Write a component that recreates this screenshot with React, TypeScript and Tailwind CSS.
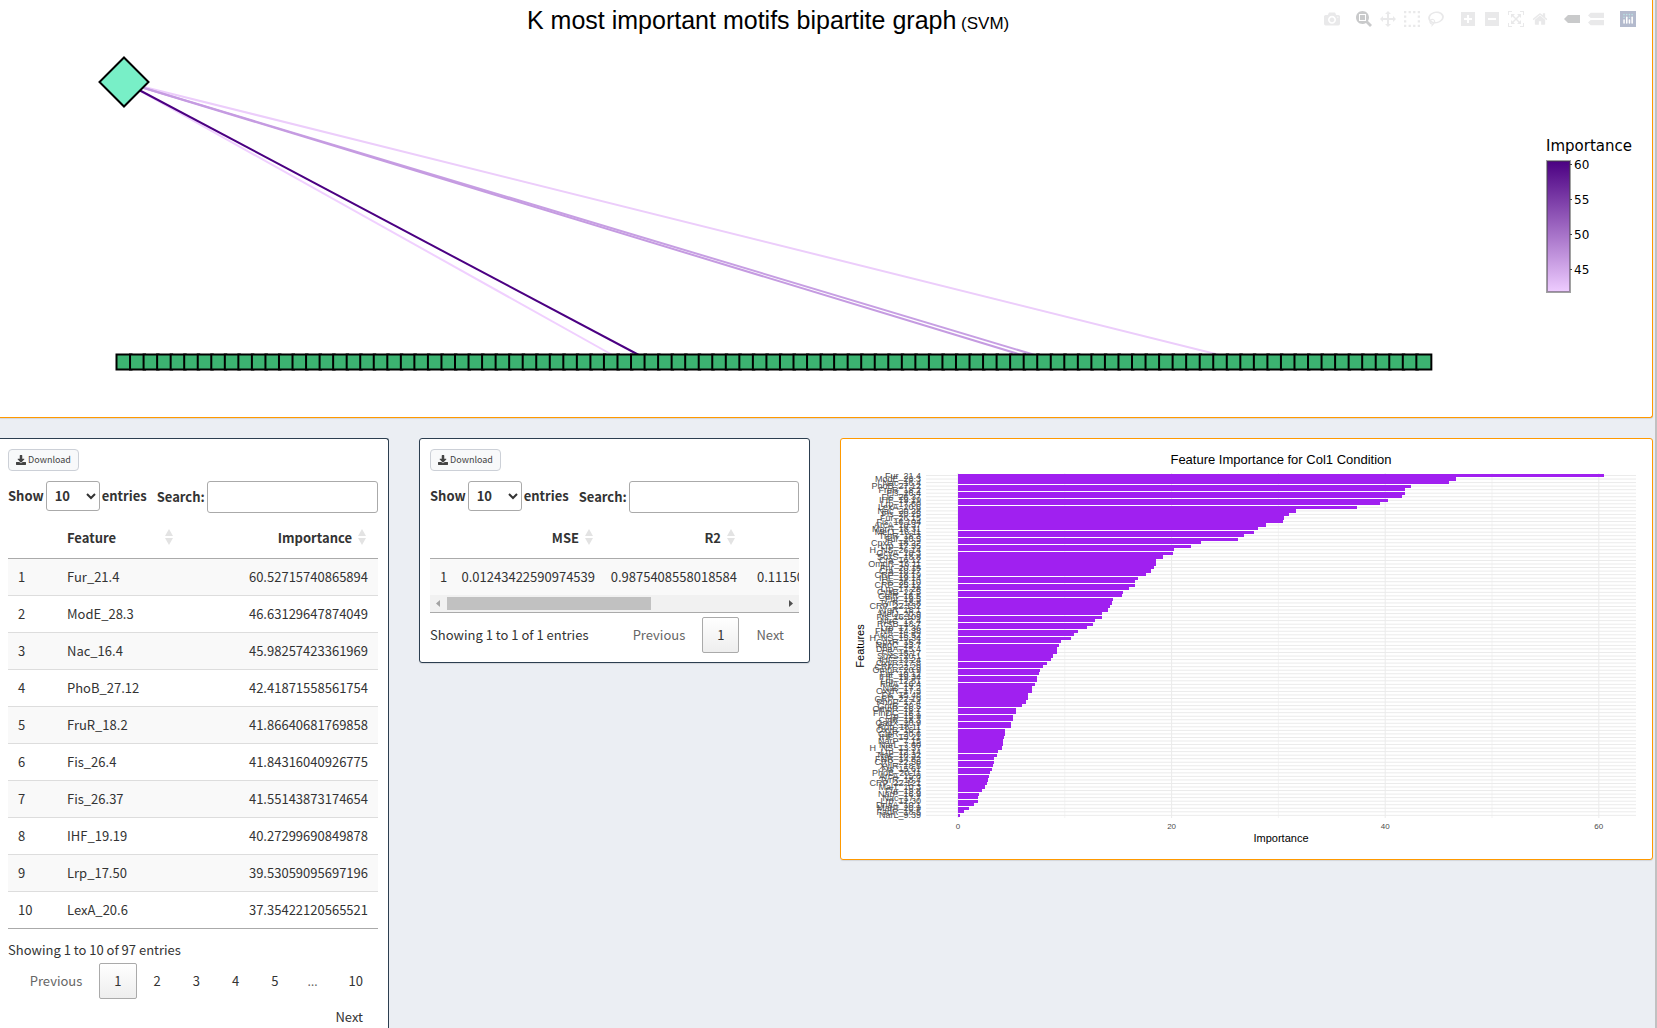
import React from "react";

const ICONS: Record<string, { w: number; h: number; d: string }> = {
  camera: { w: 1000, h: 1000, d: "m500 450c-83 0-150-67-150-150 0-83 67-150 150-150 83 0 150 67 150 150 0 83-67 150-150 150z m400 150h-120c-16 0-34 13-39 29l-31 93c-6 15-23 28-40 28h-340c-16 0-34-13-39-28l-31-94c-6-15-23-28-40-28h-120c-55 0-100-45-100-100v-450c0-55 45-100 100-100h800c55 0 100 45 100 100v450c0 55-45 100-100 100z m-400-550c-138 0-250 112-250 250 0 138 112 250 250 250 138 0 250-112 250-250 0-138-112-250-250-250z m365 380c-19 0-35 16-35 35 0 19 16 35 35 35 19 0 35-16 35-35 0-19-16-35-35-35z" },
  zoom: { w: 1000, h: 1000, d: "m1000-25l-250 251c40 63 63 138 63 218 0 224-182 406-407 406-224 0-406-182-406-406s183-406 407-406c80 0 155 22 218 62l250-250 125 125z m-812 250l0 438 437 0 0-438-437 0z m62 375l313 0 0-312-313 0 0 312z" },
  pan: { w: 1000, h: 1000, d: "m1000 350l-187 188 0-125-250 0 0 250 125 0-188 187-187-187 125 0 0-250-250 0 0 125-188-188 186-187 0 125 252 0 0-250-125 0 187-188 188 188-125 0 0 250 250 0 0-126 187 188z" },
  select: { w: 1000, h: 1000, d: "m0 850l0-143 143 0 0 143-143 0z m286 0l0-143 143 0 0 143-143 0z m285 0l0-143 143 0 0 143-143 0z m286 0l0-143 143 0 0 143-143 0z m-857-286l0-143 143 0 0 143-143 0z m857 0l0-143 143 0 0 143-143 0z m-857-285l0-143 143 0 0 143-143 0z m857 0l0-143 143 0 0 143-143 0z m-857-286l0-143 143 0 0 143-143 0z m286 0l0-143 143 0 0 143-143 0z m285 0l0-143 143 0 0 143-143 0z m286 0l0-143 143 0 0 143-143 0z" },
  lasso: { w: 1031, h: 1000, d: "m1018 538c-36 207-290 336-568 286-277-48-473-256-436-463 10-57 36-108 76-151-13-66 11-137 68-183 34-28 75-41 114-42l-55-70 0 0c-2-1-3-2-4-3-10-14-8-34 5-45 14-11 34-8 45 4 1 1 2 3 2 5l0 0 113 140c16 11 31 24 45 40 4 3 6 7 8 11 48-3 100 0 151 9 278 48 473 255 436 462z m-624-379c-80 14-149 48-197 96 42 42 109 47 156 9 33-26 47-66 41-105z m-187-74c-19 16-33 37-39 60 50-32 109-55 174-68-42-25-95-24-135 8z m360 75c-34-7-69-9-102-8 8 62-16 128-68 170-73 59-175 54-244-5-9 20-16 40-20 61-28 159 121 317 333 354s407-60 434-217c28-159-121-318-333-355z" },
  plus: { w: 875, h: 1000, d: "m1 787l0-875 875 0 0 875-875 0z m687-500l-187 0 0-187-125 0 0 187-188 0 0 125 188 0 0 187 125 0 0-187 187 0 0-125z" },
  minus: { w: 875, h: 1000, d: "m0 788l0-876 875 0 0 876-875 0z m688-500l-500 0 0 125 500 0 0-125z" },
  autoscale: { w: 1000, h: 1000, d: "m250 850l-187 0-63 0 0-62 0-188 63 0 0 188 187 0 0 62z m688 0l-188 0 0-62 188 0 0-188 62 0 0 188 0 62-62 0z m-875-938l0 188-63 0 0-188 0-62 63 0 187 0 0 62-187 0z m875 188l0-188-188 0 0-62 188 0 62 0 0 62 0 188-62 0z m-125 188l-1 0-93-94-156 156 156 156 92-93 2 0 0 250-250 0 0-2 93-92-156-156-156 156 94 92 0 2-250 0 0-250 0 0 93 93 157-156-157-156-93 94 0 0 0-250 250 0 0 0-94 93 156 157 156-157-93-93 0 0 250 0 0 250z" },
  home: { w: 929, h: 1000, d: "m786 296v-267q0-15-11-26t-25-10h-214v214h-143v-214h-214q-15 0-25 10t-11 26v267q0 1 0 2t0 2l321 264 321-264q1-1 1-4z m124 39l-34-41q-5-5-12-6h-2q-7 0-12 3l-386 322-386-322q-7-4-13-4-7 2-12 7l-35 41q-4 5-3 13t6 12l401 334q18 15 42 15t43-15l136-114v109q0 8 5 13t13 5h107q8 0 13-5t5-13v-227l122-102q5-5 6-12t-4-13z" },
  closest: { w: 1500, h: 1000, d: "m375 725l0 0-375-375 375-374 0-1 1125 0 0 750-1125 0z" },
  compare: { w: 1125, h: 1000, d: "m187 786l0 2-187-188 188-187 0 0 937 0 0 373-938 0z m0-499l0 1-187-188 188-188 0 0 937 0 0 376-938-1z" },
};

const MODEBAR: { icon: string; label: string; active?: boolean }[][] = [
  [{ icon: "camera", label: "Download plot as a png" }],
  [
    { icon: "zoom", label: "Zoom", active: true },
    { icon: "pan", label: "Pan" },
    { icon: "select", label: "Box Select" },
    { icon: "lasso", label: "Lasso Select" },
  ],
  [
    { icon: "plus", label: "Zoom in" },
    { icon: "minus", label: "Zoom out" },
    { icon: "autoscale", label: "Autoscale" },
    { icon: "home", label: "Reset axes" },
  ],
  [
    { icon: "closest", label: "Show closest data on hover", active: true },
    { icon: "compare", label: "Compare data on hover" },
  ],
];

function Modebar() {
  return (
    <div className="absolute right-3 top-[11px] flex gap-2">
      {MODEBAR.map((group, g) => (
        <div key={g} className="flex">
          {group.map((b) => (
            <button
              key={b.icon}
              type="button"
              aria-label={b.label}
              className={b.active ? "px-1 text-[#c9cacb]" : "px-1 text-[#e9e9ea]"}
            >
              <svg className="block size-4" viewBox={`0 0 ${ICONS[b.icon].w} ${ICONS[b.icon].h}`}>
                <path d={ICONS[b.icon].d} transform="matrix(1 0 0 -1 0 850)" fill="currentColor" />
              </svg>
            </button>
          ))}
        </div>
      ))}
      <a href="#plotly" aria-label="Produced with Plotly" className="px-1">
        <svg className="block size-4" viewBox="0 0 16 16">
          <rect width="16" height="16" fill="#b3bacd" />
          <g fill="#b9e2e4">
            <circle cx="4" cy="3.6" r="0.8" />
            <circle cx="6.7" cy="3.6" r="0.8" />
            <circle cx="9.4" cy="3.6" r="0.8" />
            <circle cx="12.1" cy="3.6" r="0.8" />
            <circle cx="4" cy="6.3" r="0.8" />
            <circle cx="9.4" cy="6.3" r="0.8" />
          </g>
          <g fill="#fff">
            <rect x="3.3" y="8.2" width="1.5" height="4.6" rx="0.7" />
            <rect x="6" y="5.6" width="1.5" height="7.2" rx="0.7" />
            <rect x="8.7" y="8.2" width="1.5" height="4.6" rx="0.7" />
            <rect x="11.4" y="5.6" width="1.5" height="7.2" rx="0.7" />
          </g>
        </svg>
      </a>
    </div>
  );
}

const NODE_COUNT = 97;
const nodeX = (i: number) => 124 + i * 13.54;
const EDGES = [
  { to: 37, color: "#f0d0ff" },
  { to: 83, color: "#eccdfb" },
  { to: 69, color: "#c79fe3" },
  { to: 68, color: "#c59be1" },
  { to: 39, color: "#4b0082" },
];

function BipartiteGraph() {
  return (
    <svg className="block h-auto w-full" viewBox="0 0 1652 417" role="img" aria-label="Bipartite graph">
      <defs>
        <linearGradient id="importance" x1="0" y1="0" x2="0" y2="1">
          <stop offset="0" stopColor="#4b0082" />
          <stop offset="1" stopColor="#eeccff" />
        </linearGradient>
      </defs>
      <text x="527" y="29" className="font-['Liberation_Sans',sans-serif] text-[25px]">
        K most important motifs bipartite graph<tspan className="text-[17px]"> (SVM)</tspan>
      </text>
      {EDGES.map((e) => (
        <line key={e.to} x1="124" y1="82" x2={nodeX(e.to)} y2="362" stroke={e.color} strokeWidth="2" />
      ))}
      <path d="M124 57.5L148.5 82L124 106.5L99.5 82Z" fill="#78efc7" stroke="#000" strokeWidth="2" />
      {Array.from({ length: NODE_COUNT }, (_, i) => (
        <rect key={i} x={nodeX(i) - 7.5} y="354.5" width="15" height="15" fill="#3cb371" stroke="#000" strokeWidth="2" />
      ))}
      <text x="1546" y="151" className="font-['DejaVu_Sans',sans-serif] text-[15px]">Importance</text>
      <rect x="1547" y="161" width="23" height="131" fill="url(#importance)" stroke="#444" strokeOpacity="0.5" strokeWidth="2" />
      {[60, 55, 50, 45].map((t, i) => (
        <g key={t}>
          <rect x="1570" y={164 + i * 35} width="2" height="1" fill="#444" />
          <text x="1574" y={169 + i * 35} className="font-['DejaVu_Sans',sans-serif] text-[12px]">{t}</text>
        </g>
      ))}
    </svg>
  );
}

const BARS: [string, number][] = [
  ["Fur_21.4", 60.53], ["ModE_28.3", 46.63], ["Nac_16.4", 45.98], ["PhoB_27.12", 42.42], ["FruR_18.2", 41.87],
  ["Fis_26.4", 41.84], ["Fis_26.37", 41.55], ["IHF_19.19", 40.27], ["Lrp_17.50", 39.53], ["LexA_20.6", 37.35],
  ["Nac_20.28", 31.65], ["Fis_20.25", 31], ["Fur_26.15", 30.5], ["Fis_16.104", 30.4], ["ArcA_18.37", 28.84],
  ["MarA_18.31", 28.1], ["MetJ_16.11", 27.7], ["TrpR_18.3", 26.8], ["Fur_20.5", 26.25], ["CpxR_18.22", 22.75],
  ["Lrp_17.35", 21.8], ["H_NS_26.14", 20.2], ["GcvA_18.3", 20.13], ["SoxS_18.8", 19.2], ["Cra_16.12", 18.5],
  ["OmpR_16.11", 18.5], ["Fnr_20.15", 18.36], ["Cra_18.27", 18.07], ["CRP_18.19", 17.6], ["IHF_19.14", 16.85],
  ["Fis_26.10", 16.57], ["CRP_25.12", 16.57], ["Lrp_17.28", 16], ["CysB_22.5", 15.45], ["GalR_16.5", 15.35],
  ["Fur_19.5", 14.5], ["TyrR_18.8", 14.4], ["CRP_22.132", 14.2], ["ArgR_18.1", 14.05], ["MetJ_20.9", 13.48],
  ["Fis_16.109", 13.48], ["NtrC_17.4", 12.8], ["RcsB_18.7", 12.6], ["Lrp_17.36", 12.08], ["FNR_14.38", 11.24],
  ["ArcA_15.52", 10.86], ["H_NS_15.34", 10.58], ["CpxR_15.4", 9.64], ["NagC_23.7", 9.45], ["DnaA_15.4", 9.27],
  ["Fis_15.17", 9.27], ["SoxS_20.1", 8.9], ["IHF_13.24", 8.7], ["OxyR_17.8", 8.33], ["CRP_22.29", 7.96],
  ["OmpR_20.9", 7.68], ["Fur_19.12", 7.58], ["IHF_19.34", 7.4], ["Lrp_12.51", 7.4], ["FhlA_16.4", 7.2],
  ["Nac_17.2", 6.93], ["OxyR_17.3", 6.93], ["Fis_15.48", 6.55], ["CRP_22.19", 6.55], ["PhoP_17.4", 6.37],
  ["GntR_20.5", 5.99], ["OmpR_16.2", 5.43], ["FlhDC_16.1", 5.43], ["Lrp_15.9", 5.15], ["CytR_18.3", 5.15],
  ["GadX_20.9", 4.96], ["Rob_18.11", 4.96], ["OxyR_16.1", 4.4], ["GlpR_20.6", 4.4], ["IHF_13.21", 4.3],
  ["NarP_7.15", 4.2], ["NarL_7.60", 4.2], ["H_NS_13.37", 4.1], ["Lrp_12.14", 3.75], ["Nac_18.32", 3.65],
  ["FNR_14.82", 3.37], ["CRP_22.58", 3.37], ["XylR_18.5", 3.28], ["Fis_15.61", 3.18], ["PhoB_20.11", 3],
  ["ArcA_15.8", 2.9], ["TyrR_18.4", 2.8], ["CRP_22.121", 2.7], ["MalT_10.3", 2.53], ["Fur_19.8", 2.25],
  ["NarP_16.9", 1.97], ["Nac_17.7", 1.87], ["Lrp_12.30", 1.87], ["DnaA_10.1", 1.5], ["MarA_20.9", 1.03],
  ["FadR_18.5", 0.56], ["NarL_9.39", 0.19],
];

function FeatureChart() {
  const x = (v: number) => 958 + v * 10.68;
  const y = (i: number) => 475.5 + i * 3.54;
  return (
    <svg
      className="block h-auto w-full font-['Liberation_Sans',sans-serif]"
      viewBox="841 439 811 420"
      role="img"
      aria-label="Feature Importance for Col1 Condition"
    >
      <text x="1281" y="464" textAnchor="middle" className="text-[13px]">Feature Importance for Col1 Condition</text>
      {BARS.map((_, i) => (
        <line key={i} x1="926" x2="1636" y1={y(i)} y2={y(i)} stroke="#ebebeb" strokeWidth="1" />
      ))}
      {[0, 10, 20, 30, 40, 50, 60].map((v) => (
        <line key={v} x1={x(v)} x2={x(v)} y1="473" y2="818" stroke="#ebebeb" strokeWidth={v % 20 ? 0.6 : 1} />
      ))}
      {BARS.map(([name, v], i) => (
        <rect key={name} x="958" y={y(i) - 1.6} width={v * 10.68} height="3.2" fill="#a020f0" shapeRendering="crispEdges" />
      ))}
      {BARS.map(([name], i) => (
        <text key={name} x="921" y={y(i) + 3} textAnchor="end" fill="#4d4d4d" className="text-[9px]">{name}</text>
      ))}
      {[0, 20, 40, 60].map((v) => (
        <text key={v} x={x(v)} y="829" textAnchor="middle" fill="#4d4d4d" className="text-[8px]">{v}</text>
      ))}
      <text x="1281" y="842" textAnchor="middle" className="text-[11px]">Importance</text>
      <text transform="translate(864 646) rotate(-90)" textAnchor="middle" className="text-[11px]">Features</text>
    </svg>
  );
}

function DownloadButton() {
  return (
    <button
      type="button"
      className="flex h-[22px] w-[71px] items-center justify-center gap-[2px] rounded border border-[#ccd0d7] bg-[#f8f9fa] text-[9px] leading-4 text-[#444]"
    >
      <svg className="size-[10px]" viewBox="0 0 512 512" fill="currentColor">
        <path d="M216 0h80c13.300 0 24 10.700 24 24v168h87.700c17.800 0 26.700 21.500 14.100 34.100L269.700 378.300c-7.500 7.500-19.800 7.500-27.300 0L90.100 226.100c-12.600-12.600-3.700-34.100 14.100-34.100H192V24c0-13.300 10.700-24 24-24zm296 376v112c0 13.300-10.700 24-24 24H24c-13.300 0-24-10.700-24-24V376c0-13.300 10.700-24 24-24h146.700l49 49c20.100 20.100 52.500 20.100 72.600 0l49-49H488c13.300 0 24 10.700 24 24z" />
      </svg>
      Download
    </button>
  );
}

function TableControls({ id }: { id: string }) {
  return (
    <div className="mt-[10px] flex h-8 items-start gap-[10px] text-[13px] font-bold">
      <label className="flex h-[30px] items-center gap-[2px]">
        Show
        <span className="relative flex">
          <select
            defaultValue="10"
            className="h-[30px] w-[54px] appearance-none rounded-[3px] border border-[#aaa] bg-transparent pl-2 font-bold"
          >
            <option>10</option>
            <option>25</option>
            <option>50</option>
            <option>100</option>
          </select>
          <svg className="pointer-events-none absolute right-1 top-[11px] h-2 w-[10px]" viewBox="0 0 10 8" fill="none" stroke="#333" strokeWidth="2">
            <path d="M1 2l4 4 4-4" />
          </svg>
        </span>
        entries
      </label>
      <label htmlFor={id} className="flex min-w-0 flex-1 items-center gap-[2px]">
        Search:
        <input id={id} type="search" className="h-8 min-w-0 flex-1 rounded-[3px] border border-[#aaa] bg-transparent px-1 font-normal" />
      </label>
    </div>
  );
}

function SortIcon() {
  return (
    <svg className="absolute right-[12px] top-[9px] h-4 w-2" viewBox="0 0 8 16" fill="#e3e3e3">
      <path d="M4 0l4 7H0zM4 16l4-7H0z" />
    </svg>
  );
}

function PageButton({ children, current, muted }: { children: React.ReactNode; current?: boolean; muted?: boolean }) {
  const tone = current
    ? "border-[#aaa] bg-linear-to-b from-white to-[#eee] text-[#333]"
    : muted
      ? "border-transparent text-[#666]"
      : "border-transparent text-[#333]";
  return (
    <button type="button" disabled={muted} className={`ml-[2px] h-9 rounded-xs border px-[14px] leading-5 ${tone}`}>
      {children}
    </button>
  );
}

const ROWS = [
  ["Fur_21.4", "60.52715740865894"],
  ["ModE_28.3", "46.63129647874049"],
  ["Nac_16.4", "45.98257423361969"],
  ["PhoB_27.12", "42.41871558561754"],
  ["FruR_18.2", "41.86640681769858"],
  ["Fis_26.4", "41.84316040926775"],
  ["Fis_26.37", "41.55143873174654"],
  ["IHF_19.19", "40.27299690849878"],
  ["Lrp_17.50", "39.53059095697196"],
  ["LexA_20.6", "37.35422120565521"],
];

function FeatureTable() {
  return (
    <section className="min-w-0 self-stretch rounded-tr-[3px] border-r border-t border-[#2c3e50] bg-white pb-4 pl-2 pr-[10px] pt-[10px]">
      <DownloadButton />
      <TableControls id="search-features" />
      <table className="mt-[7px] w-full table-fixed border-collapse text-[13px] leading-5">
        <colgroup>
          <col className="w-[49px]" />
          <col className="w-[128px]" />
          <col />
        </colgroup>
        <thead>
          <tr className="h-[38px] border-b border-[#aaa]">
            <th aria-label="Row" />
            <th className="relative px-[10px] pb-[2px] text-left font-bold">Feature<SortIcon /></th>
            <th className="relative pb-[2px] pl-[10px] pr-[26px] text-right font-bold">Importance<SortIcon /></th>
          </tr>
        </thead>
        <tbody>
          {ROWS.map(([name, value], i) => (
            <tr key={name} className="h-[37px] border-b border-[#ddd] odd:bg-[#f9f9f9] last:border-[#aaa]">
              <td className="px-[10px]">{i + 1}</td>
              <td className="px-[10px]">{name}</td>
              <td className="px-[10px] text-right">{value}</td>
            </tr>
          ))}
        </tbody>
      </table>
      <div className="mt-[11px] text-[13px] leading-5">Showing 1 to 10 of 97 entries</div>
      <nav aria-label="Feature pages" className="mt-[3px] flex flex-wrap justify-end text-[13px]">
        <PageButton muted>Previous</PageButton>
        <PageButton current>1</PageButton>
        <PageButton>2</PageButton>
        <PageButton>3</PageButton>
        <PageButton>4</PageButton>
        <PageButton>5</PageButton>
        <span className="px-[14px] font-['Open_Sans',sans-serif] leading-9 text-[#666]">…</span>
        <PageButton>10</PageButton>
        <PageButton>Next</PageButton>
      </nav>
    </section>
  );
}

function MetricsTable() {
  return (
    <section className="min-w-0 rounded-[3px] border border-[#2c3e50] bg-white p-[10px] pb-[9px] shadow-[0_1px_1px_rgba(0,0,0,0.1)]">
      <DownloadButton />
      <TableControls id="search-metrics" />
      <div className="mt-[7px] overflow-hidden border-b border-[#aaa]">
        <table className="w-[560px] table-fixed border-collapse text-[13px] leading-5">
          <colgroup>
            <col className="w-[27px]" />
            <col className="w-[148px]" />
            <col className="w-[142px]" />
            <col />
          </colgroup>
          <thead>
            <tr className="h-[38px] border-b border-[#aaa]">
              <th aria-label="Row" />
              <th className="relative pb-[2px] pr-[26px] text-right font-bold">MSE<SortIcon /></th>
              <th className="relative pb-[2px] pr-[26px] text-right font-bold">R2<SortIcon /></th>
              <th aria-label="Metric" />
            </tr>
          </thead>
          <tbody>
            <tr className="h-[37px] bg-[#f9f9f9]">
              <td className="pl-[10px]">1</td>
              <td className="pr-[10px] text-right">0.01243422590974539</td>
              <td className="pr-[10px] text-right">0.9875408558018584</td>
              <td className="pl-[10px]">0.11150</td>
            </tr>
          </tbody>
        </table>
        <div className="flex h-[17px] items-center bg-[#f1f1f1]">
          <svg className="h-[17px] w-[17px]" viewBox="0 0 17 17" fill="#a3a3a3"><path d="M10 5v7L6 8.500z" /></svg>
          <div className="flex-1"><div className="h-[13px] w-[61%] bg-[#c1c1c1]" /></div>
          <svg className="h-[17px] w-[17px]" viewBox="0 0 17 17" fill="#505050"><path d="M7 5v7l4-3.500z" /></svg>
        </div>
      </div>
      <div className="mt-1 flex items-center justify-between text-[13px] leading-5">
        <div>Showing 1 to 1 of 1 entries</div>
        <nav aria-label="Metric pages" className="flex">
          <PageButton muted>Previous</PageButton>
          <PageButton current>1</PageButton>
          <PageButton muted>Next</PageButton>
        </nav>
      </div>
    </section>
  );
}

export default function App() {
  return (
    <div className="flex h-screen overflow-hidden bg-[#ebeef3] font-['Noto_Sans_CJK_SC',sans-serif] text-[#333]">
      <main className="flex min-w-0 flex-1 flex-col gap-5 pr-[2px]">
        <section className="relative rounded-br-[3px] border-b border-r border-[#ff9900] bg-white shadow-[0_1px_1px_rgba(0,0,0,0.1)]">
          <BipartiteGraph />
          <Modebar />
        </section>
        <div className="grid flex-1 grid-cols-[minmax(0,389fr)_minmax(0,391fr)_minmax(0,813fr)] items-start gap-[30px]">
          <FeatureTable />
          <MetricsTable />
          <section className="min-w-0 rounded-[3px] border border-[#ff9900] bg-white shadow-[0_1px_1px_rgba(0,0,0,0.1)]">
            <FeatureChart />
          </section>
        </div>
      </main>
      <div className="w-[2px] bg-[#c1c1c1]" />
    </div>
  );
}
